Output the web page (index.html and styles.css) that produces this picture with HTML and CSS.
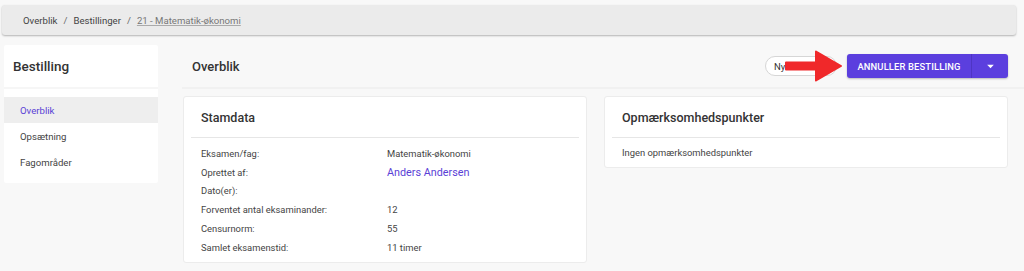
FILE: index.html
```html
<!DOCTYPE html>
<html lang="da">
<head>
<meta charset="utf-8">
<link rel="stylesheet" href="styles.css">
</head>
<body>
<nav class="crumbs">
  <span>Overblik</span><span class="sep">/</span><span>Bestillinger</span><span class="sep">/</span><a class="cur">21 - Matematik-økonomi</a>
</nav>
<div class="layout">
  <aside class="side">
    <div class="side-head">Bestilling</div>
    <ul class="side-list">
      <li class="active">Overblik</li>
      <li>Opsætning</li>
      <li>Fagområder</li>
    </ul>
  </aside>
  <main class="main">
    <div class="main-head">
      <h1>Overblik</h1>
      <div class="actions">
        <span class="pill">Ny</span>
        <div class="btn-group">
          <button class="btn">ANNULLER BESTILLING</button>
          <button class="btn caret"><svg width="9" height="5" viewBox="0 0 10 6"><path d="M1 1h8L5 5z" fill="#fff"/></svg></button>
        </div>
        <svg class="arrow" width="58" height="34" viewBox="0 0 58 34"><path d="M1 13.5h30V2.5L56 17 31 31.5V20.5H1z" fill="#f0282a" stroke="#f0282a" stroke-width="2" stroke-linejoin="round"/></svg>
      </div>
    </div>
    <div class="cards">
      <section class="card">
        <h2>Stamdata</h2>
        <dl class="rows">
          <dt>Eksamen/fag:</dt><dd>Matematik-økonomi</dd>
          <dt>Oprettet af:</dt><dd><a class="link">Anders Andersen</a></dd>
          <dt>Dato(er):</dt><dd></dd>
          <dt>Forventet antal eksaminander:</dt><dd>12</dd>
          <dt>Censurnorm:</dt><dd>55</dd>
          <dt>Samlet eksamenstid:</dt><dd>11 timer</dd>
        </dl>
      </section>
      <section class="card">
        <h2>Opmærksomhedspunkter</h2>
        <p class="empty">Ingen opmærksomhedspunkter</p>
      </section>
    </div>
  </main>
</div>
</body>
</html>
```
FILE: styles.css
```css
* { box-sizing: border-box; }
html, body { margin: 0; padding: 0; }
body {
  background: #f8f8f8;
  font-family: Roboto, "Liberation Sans", sans-serif;
  color: #444;
  width: 1024px;
  height: 271px;
  overflow: hidden;
}
.crumbs {
  margin: 5px 8px 0 2px;
  height: 30px;
  background: #ebebeb;
  border-radius: 3px;
  box-shadow: 0 1px 2px rgba(0,0,0,0.28);
  display: flex;
  align-items: center;
  padding-left: 21px;
  font-size: 9.6px;
  color: #444;
}
.crumbs .sep { margin: 0 6px; color: #666; }
.crumbs .cur { color: #777; text-decoration: underline; text-decoration-color: #aaa; }
.layout {
  display: flex;
  margin-top: 10px;
  padding-left: 4px;
  align-items: flex-start;
}
.side {
  width: 154px;
  background: #fff;
  border-radius: 2px;
  padding-bottom: 8px;
}
.side-head {
  height: 44px;
  display: flex;
  align-items: center;
  padding-left: 9px;
  font-size: 13.5px;
  font-weight: 500;
  color: #333;
  border-bottom: 2px solid #f6f6f6;
}
.side-list { list-style: none; margin: 0; padding: 8px 0 0; }
.side-list li {
  height: 26px;
  display: flex;
  align-items: center;
  padding-left: 16px;
  font-size: 9.6px;
  color: #444;
}
.side-list li.active { background: #eeeeee; color: #5a3fd6; }
.main { flex: 1; padding-left: 24px; }
.main-head {
  height: 44px;
  display: flex;
  align-items: center;
  justify-content: space-between;
  border-bottom: 2px solid #f1f1f1;
  padding-left: 10px;
  padding-right: 16px;
}
.main-head h1 {
  margin: 0;
  font-size: 13px;
  font-weight: 500;
  color: #333;
  padding-top: 1px;
}
.actions { display: flex; align-items: center; position: relative; }
.pill {
  width: 72px;
  height: 20px;
  border: 1px solid #d6d6d6;
  border-radius: 10px;
  background: #fff;
  font-size: 9.5px;
  color: #333;
  display: flex;
  align-items: center;
  padding-left: 8px;
  margin-right: 10px;
}
.btn-group {
  display: flex;
  background: #5b3fde;
  border-radius: 3px;
  box-shadow: 0 1px 2px rgba(0,0,0,0.25);
  height: 24px;
}
.btn {
  background: transparent;
  border: 0;
  color: #fff;
  font-family: inherit;
  font-size: 9.4px;
  font-weight: 500;
  letter-spacing: 0.15px;
  white-space: nowrap;
  padding: 0;
  height: 24px;
  width: 124px;
}
.btn.caret {
  width: 37px;
  border-left: 1px solid #4e35c4;
  display: flex;
  align-items: center;
  justify-content: center;
}
.arrow { position: absolute; left: 20px; top: -5px; }
.cards {
  display: flex;
  gap: 17px;
  padding-top: 7px;
  align-items: flex-start;
  padding-right: 16px;
  margin-left: 1px;
}
.card {
  background: #fff;
  border: 1px solid #ececec;
  border-radius: 3px;
  flex: 1;
  padding: 0 7px;
}
.card h2 {
  margin: 0;
  height: 41px;
  display: flex;
  align-items: center;
  padding-left: 10px;
  padding-top: 1px;
  font-size: 12.5px;
  font-weight: 500;
  color: #333;
  border-bottom: 1px solid #e6e6e6;
}
.rows {
  display: grid;
  grid-template-columns: 186px 1fr;
  grid-auto-rows: 18.8px;
  margin: 6px 0 5px;
  padding-left: 10px;
  font-size: 9.4px;
  color: #444;
}
.rows dt, .rows dd { margin: 0; display: flex; align-items: center; }
.link { color: #5a3fd6; font-size: 10.8px; }
.empty { margin: 0; height: 29px; display: flex; align-items: center; font-size: 9.4px; color: #444; padding-left: 10px; }
```
